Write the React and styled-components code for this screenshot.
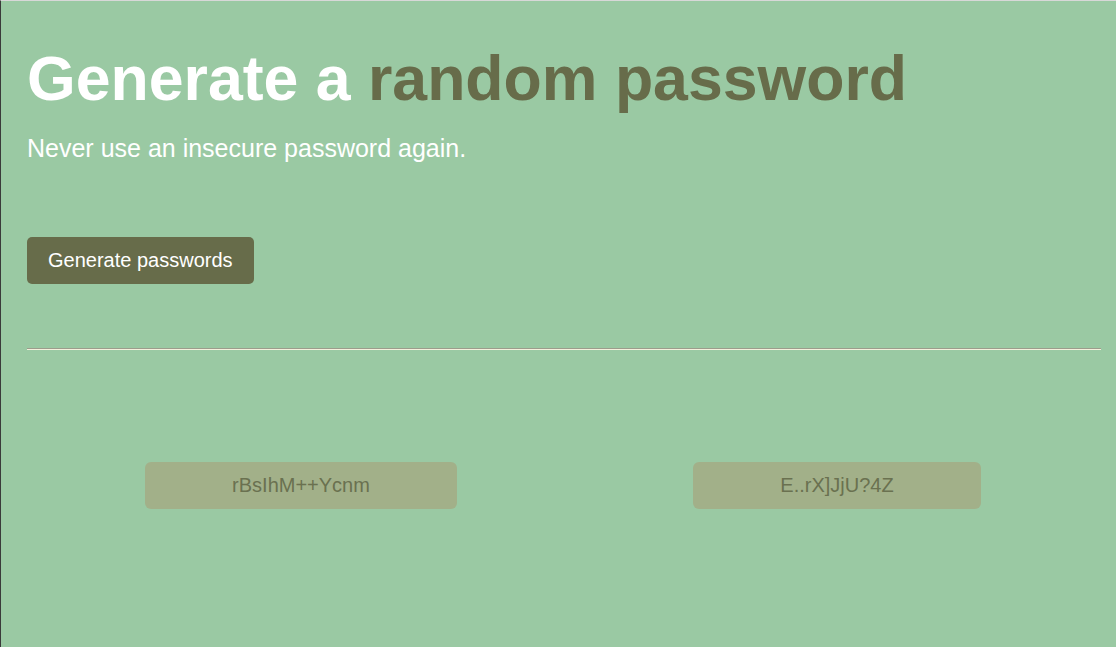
import React, { useState } from 'react';
import styled, { createGlobalStyle } from 'styled-components';

const GlobalStyle = createGlobalStyle`
  html, body {
    margin: 0;
    padding: 0;
    background: #9ac9a3;
    font-family: "Liberation Sans", Arial, sans-serif;
  }
  body {
    min-height: 647px;
    border-left: 1px solid #3a3a3a;
    border-top: 1px solid #d8d8d8;
    box-sizing: border-box;
  }
`;

const Page = styled.main`
  padding: 42px 15px 0 26px;
`;

const Title = styled.h1`
  margin: 0;
  font-size: 62.6px;
  line-height: 1.15;
  font-weight: 700;
  color: #ffffff;
`;

const Accent = styled.span`
  color: #676c4a;
`;

const Subtitle = styled.p`
  margin: 19px 0 0;
  font-size: 25px;
  line-height: 1.15;
  color: #ffffff;
`;

const GenerateButton = styled.button`
  margin-top: 74px;
  padding: 12px 21px;
  border: none;
  border-radius: 5px;
  background: #676c4a;
  color: #ffffff;
  font-family: inherit;
  font-size: 20px;
  line-height: 23px;
  cursor: pointer;
`;

const Divider = styled.hr`
  margin: 64px 0 0;
  border: none;
  border-top: 1px solid #9c9c8c;
  border-bottom: 1px solid #f3f0dc;
`;

const Results = styled.div`
  display: grid;
  grid-template-columns: repeat(2, 536px);
  justify-items: center;
  padding-left: 6px;
  margin-top: 112px;
`;

const PasswordBox = styled.div`
  padding: 12px 87px;
  border-radius: 6px;
  background: #a2b089;
  color: #6a7150;
  font-size: 20px;
  line-height: 23px;
  text-align: center;
`;

export default function App() {
  const [passwords] = useState(['rBsIhM++Ycnm', 'E..rX]JjU?4Z']);

  return (
    <>
      <GlobalStyle />
      <Page>
        <Title>
          Generate a <Accent>random password</Accent>
        </Title>
        <Subtitle>Never use an insecure password again.</Subtitle>
        <GenerateButton>Generate passwords</GenerateButton>
        <Divider />
        <Results>
          {passwords.map((pw) => (
            <PasswordBox key={pw}>{pw}</PasswordBox>
          ))}
        </Results>
      </Page>
    </>
  );
}
